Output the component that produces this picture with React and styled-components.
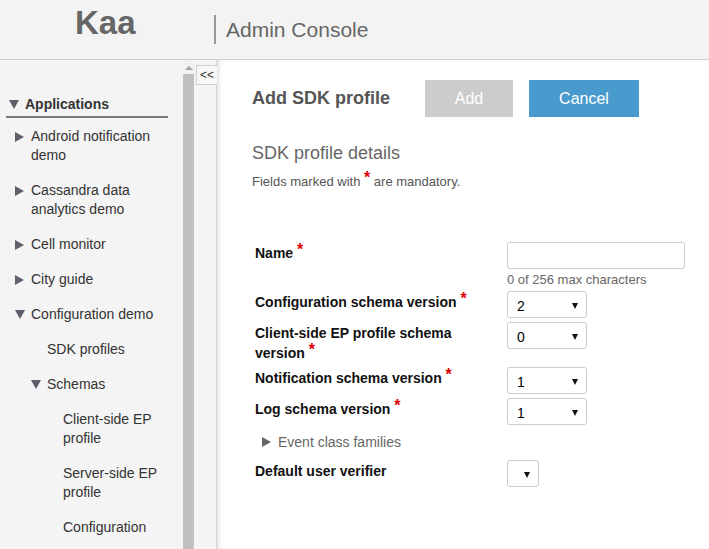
import React from "react";
import styled, { createGlobalStyle } from "styled-components";

const GlobalStyle = createGlobalStyle`
  html, body {
    margin: 0;
    padding: 0;
    height: 100%;
    overflow: hidden;
    font-family: "Liberation Sans", Arial, sans-serif;
  }
  #root {
    height: 100%;
  }
`;

const Page = styled.div`
  display: flex;
  flex-direction: column;
  height: 549px;
  background: #f4f4f4;
`;

const Header = styled.header`
  display: flex;
  align-items: center;
  height: 59px;
  border-bottom: 1px solid #cfcfcf;
  background: #f3f3f3;
`;

const Logo = styled.div`
  width: 214px;
  box-sizing: border-box;
  padding-left: 75px;
  padding-bottom: 14px;
  font-size: 33px;
  font-weight: bold;
  color: #666;
`;

const Divider = styled.div`
  width: 2px;
  height: 29px;
  background: #9a9a9a;
`;

const ConsoleTitle = styled.div`
  margin-left: 10px;
  font-size: 21px;
  color: #666;
`;

const Body = styled.div`
  flex: 1;
  display: flex;
  min-height: 0;
`;

const Sidebar = styled.nav`
  width: 183px;
  box-sizing: border-box;
  padding: 34px 15px 0 6px;
  overflow: hidden;
`;

const Scrollbar = styled.div`
  width: 11px;
  display: flex;
  flex-direction: column;
  align-items: center;
  background: #f1f1f1;
`;

const ScrollArrow = styled.div`
  margin-top: 6px;
  width: 0;
  height: 0;
  border-left: 4px solid transparent;
  border-right: 4px solid transparent;
  border-bottom: 4px solid #a3a3a3;
`;

const ScrollThumb = styled.div`
  flex: 1;
  width: 11px;
  margin-top: 4px;
  background: #c1c1c1;
`;

const Splitter = styled.div`
  width: 23px;
  box-sizing: border-box;
  padding: 5px 0 0 2px;
  background: #f4f4f4;
  border-right: 1px solid #d6d6d6;
`;

const CollapseButton = styled.div`
  width: 21px;
  height: 20px;
  box-sizing: border-box;
  border: 1px solid #cfcfcf;
  border-right: none;
  background: #f7f7f7;
  font-size: 12px;
  line-height: 18px;
  text-align: center;
  color: #333;
`;

const Main = styled.main`
  flex: 1;
  background: #fff;
  box-shadow: inset 4px 0 4px -2px rgba(0, 0, 0, 0.12);
  padding: 20px 0 0 35px;
  overflow: hidden;
`;

const TreeTitle = styled.div`
  display: flex;
  align-items: center;
  padding-bottom: 2px;
  border-bottom: 2px solid #777;
  font-size: 14px;
  font-weight: bold;
  color: #333;
  line-height: 20px;
`;

const Arrow = styled.span`
  display: inline-block;
  width: 0;
  height: 0;
  ${(p) =>
    p.$open
      ? `border-left: 5px solid transparent;
         border-right: 5px solid transparent;
         border-top: 9px solid #5f5f6b;`
      : `border-top: 5px solid transparent;
         border-bottom: 5px solid transparent;
         border-left: 9px solid #5f5f6b;`}
`;

const TitleArrow = styled(Arrow)`
  margin: 0 6px 0 3px;
`;

const TreeItem = styled.div`
  display: flex;
  align-items: flex-start;
  padding: 9px 0 7px ${(p) => p.$level * 16 - 16 + 9}px;
  font-size: 14px;
  line-height: 19px;
  color: #333;
`;

const ArrowSlot = styled.span`
  flex: 0 0 16px;
  height: 19px;
  display: flex;
  align-items: center;
`;

const TitleRow = styled.div`
  display: flex;
  align-items: center;
`;

const PageTitle = styled.h1`
  margin: 0;
  width: 173px;
  font-size: 18px;
  font-weight: bold;
  color: #555;
`;

const Button = styled.div`
  width: ${(p) => p.$width}px;
  height: 37px;
  margin-right: 16px;
  display: flex;
  align-items: center;
  justify-content: center;
  font-size: 16px;
  color: #fff;
  background: ${(p) => (p.$primary ? "#4a9bcd" : "#cccccc")};
`;

const Section = styled.h2`
  margin: 26px 0 0;
  font-size: 18px;
  font-weight: normal;
  color: #666;
`;

const Note = styled.p`
  margin: 10px 0 0;
  font-size: 13px;
  color: #555;
`;

const Star = styled.span`
  color: #d00;
  font-weight: bold;
  font-size: 16px;
  line-height: 0;
  position: relative;
  top: -3px;
`;

const Form = styled.div`
  display: grid;
  grid-template-columns: 252px auto;
  row-gap: 4px;
  margin: 53px 0 0 3px;
  align-items: start;
`;

const Label = styled.div`
  font-size: 14px;
  font-weight: bold;
  color: #111;
  line-height: 20px;
  padding: 1px 10px 0 0;
`;

const Field = styled.div`
  display: flex;
  flex-direction: column;
  align-items: flex-start;
`;

const TextInput = styled.div`
  width: 178px;
  height: 27px;
  box-sizing: border-box;
  border: 1px solid #ccc;
  border-radius: 3px;
  background: #fff;
`;

const Hint = styled.div`
  margin-top: 3px;
  font-size: 13px;
  color: #666;
`;

const Select = styled.div`
  width: ${(p) => p.$width || 80}px;
  height: 27px;
  box-sizing: border-box;
  border: 1px solid #ccc;
  border-radius: 3px;
  background: #fff;
  display: flex;
  align-items: center;
  justify-content: space-between;
  padding: 2px 8px 0 9px;
  font-size: 14px;
  color: #000;
`;

const SelectArrow = styled.span`
  width: 0;
  height: 0;
  border-left: 3px solid transparent;
  border-right: 3px solid transparent;
  border-top: 6px solid #111;
`;

const Expander = styled.div`
  grid-column: 1 / 3;
  display: flex;
  align-items: center;
  padding: 5px 0 6px 7px;
  font-size: 14px;
  color: #666;
`;

const ExpanderArrow = styled.span`
  width: 0;
  height: 0;
  border-top: 5px solid transparent;
  border-bottom: 5px solid transparent;
  border-left: 9px solid #666;
  margin-right: 7px;
`;

const tree = [
  { level: 1, text: "Android notification demo", arrow: "closed" },
  { level: 1, text: "Cassandra data analytics demo", arrow: "closed" },
  { level: 1, text: "Cell monitor", arrow: "closed" },
  { level: 1, text: "City guide", arrow: "closed" },
  { level: 1, text: "Configuration demo", arrow: "open" },
  { level: 2, text: "SDK profiles" },
  { level: 2, text: "Schemas", arrow: "open" },
  { level: 3, text: "Client-side EP profile" },
  { level: 3, text: "Server-side EP profile" },
  { level: 3, text: "Configuration" },
];

const SelectBox = ({ value, width }) => (
  <Select $width={width}>
    <span>{value}</span>
    <SelectArrow />
  </Select>
);

const App = () => {
  return (
    <Page>
      <GlobalStyle />
      <Header>
        <Logo>Kaa</Logo>
        <Divider />
        <ConsoleTitle>Admin Console</ConsoleTitle>
      </Header>
      <Body>
        <Sidebar>
          <TreeTitle>
            <TitleArrow $open />
            Applications
          </TreeTitle>
          {tree.map((item) => (
            <TreeItem key={item.text} $level={item.level}>
              <ArrowSlot>
                {item.arrow && <Arrow $open={item.arrow === "open"} />}
              </ArrowSlot>
              <span>{item.text}</span>
            </TreeItem>
          ))}
        </Sidebar>
        <Scrollbar>
          <ScrollArrow />
          <ScrollThumb />
        </Scrollbar>
        <Splitter>
          <CollapseButton>&lt;&lt;</CollapseButton>
        </Splitter>
        <Main>
          <TitleRow>
            <PageTitle>Add SDK profile</PageTitle>
            <Button $width={88}>Add</Button>
            <Button $width={110} $primary>
              Cancel
            </Button>
          </TitleRow>
          <Section>SDK profile details</Section>
          <Note>
            Fields marked with <Star>*</Star> are mandatory.
          </Note>
          <Form>
            <Label>
              Name <Star>*</Star>
            </Label>
            <Field>
              <TextInput />
              <Hint>0 of 256 max characters</Hint>
            </Field>
            <Label>
              Configuration schema version <Star>*</Star>
            </Label>
            <Field>
              <SelectBox value="2" />
            </Field>
            <Label>
              Client-side EP profile schema version <Star>*</Star>
            </Label>
            <Field>
              <SelectBox value="0" />
            </Field>
            <Label>
              Notification schema version <Star>*</Star>
            </Label>
            <Field>
              <SelectBox value="1" />
            </Field>
            <Label>
              Log schema version <Star>*</Star>
            </Label>
            <Field>
              <SelectBox value="1" />
            </Field>
            <Expander>
              <ExpanderArrow />
              Event class families
            </Expander>
            <Label>Default user verifier</Label>
            <Field>
              <SelectBox value="" width={32} />
            </Field>
          </Form>
        </Main>
      </Body>
    </Page>
  );
};

export default App;
